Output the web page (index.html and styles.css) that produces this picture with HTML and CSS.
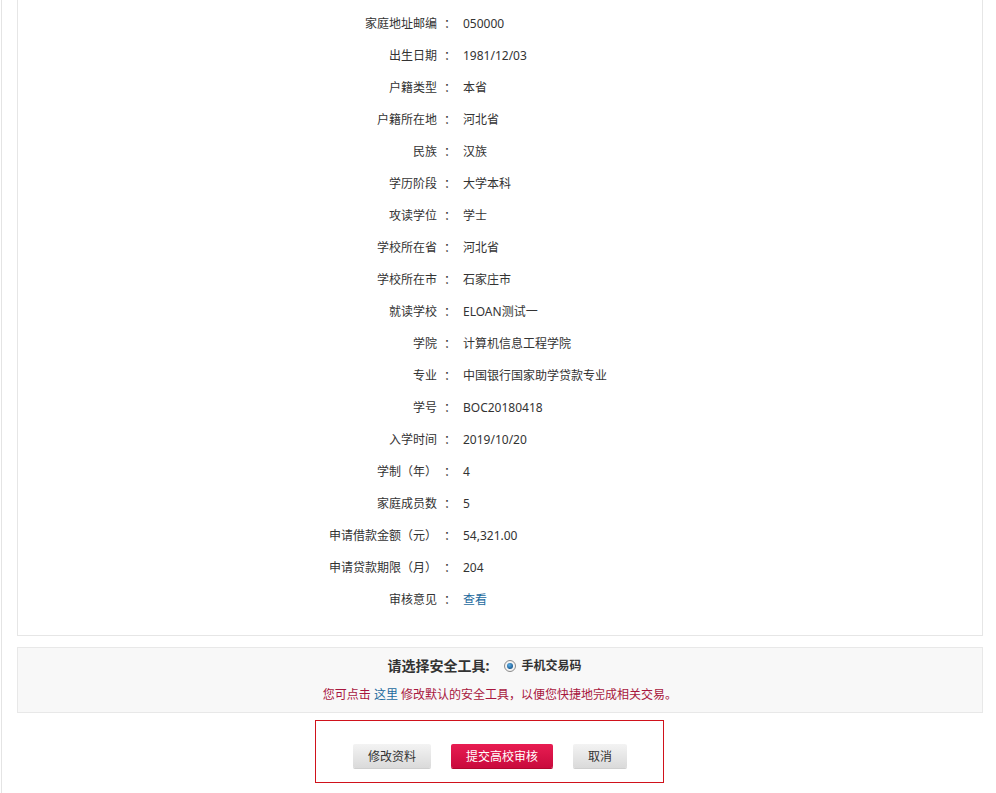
FILE: index.html
```html
<!DOCTYPE html>
<html lang="zh-CN">
<head>
<meta charset="utf-8">
<title>申请信息确认</title>
<link rel="stylesheet" href="styles.css">
</head>
<body>
<div class="page">
  <div class="card">
    <div class="row"><span class="label">家庭地址邮编</span><span class="colon">：</span><span class="value">050000</span></div>
    <div class="row"><span class="label">出生日期</span><span class="colon">：</span><span class="value">1981/12/03</span></div>
    <div class="row"><span class="label">户籍类型</span><span class="colon">：</span><span class="value">本省</span></div>
    <div class="row"><span class="label">户籍所在地</span><span class="colon">：</span><span class="value">河北省</span></div>
    <div class="row"><span class="label">民族</span><span class="colon">：</span><span class="value">汉族</span></div>
    <div class="row"><span class="label">学历阶段</span><span class="colon">：</span><span class="value">大学本科</span></div>
    <div class="row"><span class="label">攻读学位</span><span class="colon">：</span><span class="value">学士</span></div>
    <div class="row"><span class="label">学校所在省</span><span class="colon">：</span><span class="value">河北省</span></div>
    <div class="row"><span class="label">学校所在市</span><span class="colon">：</span><span class="value">石家庄市</span></div>
    <div class="row"><span class="label">就读学校</span><span class="colon">：</span><span class="value">ELOAN测试一</span></div>
    <div class="row"><span class="label">学院</span><span class="colon">：</span><span class="value">计算机信息工程学院</span></div>
    <div class="row"><span class="label">专业</span><span class="colon">：</span><span class="value">中国银行国家助学贷款专业</span></div>
    <div class="row"><span class="label">学号</span><span class="colon">：</span><span class="value">BOC20180418</span></div>
    <div class="row"><span class="label">入学时间</span><span class="colon">：</span><span class="value">2019/10/20</span></div>
    <div class="row"><span class="label">学制（年）</span><span class="colon">：</span><span class="value">4</span></div>
    <div class="row"><span class="label">家庭成员数</span><span class="colon">：</span><span class="value">5</span></div>
    <div class="row"><span class="label">申请借款金额（元）</span><span class="colon">：</span><span class="value">54,321.00</span></div>
    <div class="row"><span class="label">申请贷款期限（月）</span><span class="colon">：</span><span class="value">204</span></div>
    <div class="row"><span class="label">审核意见</span><span class="colon">：</span><span class="value"><a class="link" href="#">查看</a></span></div>
  </div>

  <div class="security">
    <div class="sec-line">
      <span class="sec-title">请选择安全工具:</span>
      <span class="radio"><span class="radio-dot"></span></span>
      <span class="sec-option">手机交易码</span>
    </div>
    <div class="sec-tip">您可点击 <a class="link" href="#">这里</a> 修改默认的安全工具，以便您快捷地完成相关交易。</div>
  </div>

  <div class="actions">
    <button class="btn btn-grey btn-edit">修改资料</button>
    <button class="btn btn-red">提交高校审核</button>
    <button class="btn btn-grey btn-cancel">取消</button>
  </div>
</div>
</body>
</html>
```

FILE: styles.css
```css
html, body {
  margin: 0;
  padding: 0;
  background: #ffffff;
}

body {
  font-family: "Noto Sans", "Noto Sans CJK SC", sans-serif;
  font-size: 12px;
  color: #333333;
}

.page {
  margin-left: 1px;
  border-left: 1px solid #e4e4e4;
  padding: 0 13px 0 15px;
  min-height: 793px;
  box-sizing: border-box;
}

.card {
  border: 1px solid #e6e6e6;
  border-top: none;
  padding: 8px 0 19px 0;
}

.row {
  display: grid;
  grid-template-columns: 419px 26px 1fr;
  height: 32px;
  align-items: center;
  line-height: 32px;
}

.label {
  text-align: right;
  white-space: nowrap;
}

.colon {
  padding-left: 7px;
}

.value {
  white-space: nowrap;
}

.link {
  color: #1c6a9e;
  text-decoration: none;
}

.security {
  margin-top: 11px;
  border: 1px solid #e8e8e8;
  background: #f8f8f8;
  padding: 9px 0 8px 0;
  text-align: center;
}

.sec-line {
  height: 18px;
  line-height: 18px;
  display: flex;
  justify-content: center;
  align-items: center;
  padding-right: 31px;
}

.sec-title {
  font-size: 14px;
  font-weight: bold;
  color: #333333;
}

.radio {
  width: 10px;
  height: 10px;
  border: 1px solid #8a8a8a;
  border-radius: 50%;
  background: #f4f4f4;
  margin-left: 15px;
  display: flex;
  align-items: center;
  justify-content: center;
}

.radio-dot {
  width: 6px;
  height: 6px;
  border-radius: 50%;
  background: radial-gradient(circle at 40% 35%, #5fb0e8 0%, #1d5f96 70%, #16466f 100%);
}

.sec-option {
  font-weight: bold;
  margin-left: 5px;
  color: #333333;
}

.sec-tip {
  margin-top: 11px;
  height: 18px;
  line-height: 18px;
  color: #a8173e;
}

.actions {
  box-sizing: border-box;
  margin-top: 7px;
  margin-left: 298px;
  width: 349px;
  border: 1px solid #d0121b;
  padding: 23px 0 14px 37px;
  display: flex;
  gap: 20px;
}

.btn {
  height: 24px;
  border: none;
  border-radius: 2px;
  font-family: "Noto Sans", "Noto Sans CJK SC", sans-serif;
  font-size: 12px;
  padding: 0;
  cursor: pointer;
}

.btn-grey {
  color: #333333;
  background: linear-gradient(#f3f3f3, #dadada);
  box-shadow: 0 1px 0 #cfcfcf;
}

.btn-edit {
  width: 78px;
}

.btn-cancel {
  width: 54px;
}

.btn-red {
  width: 102px;
  color: #ffffff;
  background: linear-gradient(#e81d52, #c90a3d);
  box-shadow: 0 1px 0 #b0072f;
}
```
